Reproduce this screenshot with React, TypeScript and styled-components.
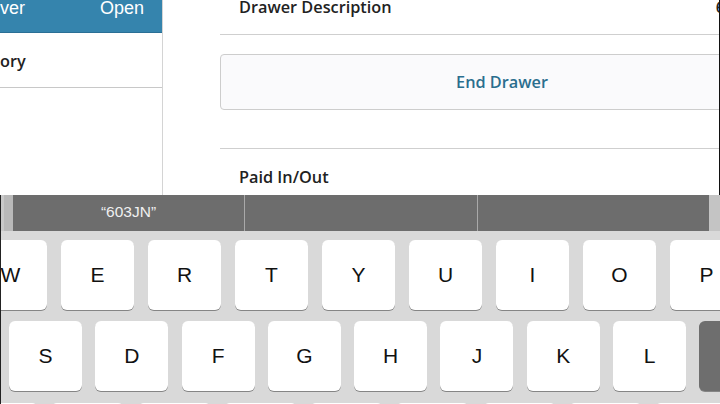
import styled, { createGlobalStyle } from 'styled-components';

const GlobalStyle = createGlobalStyle`
  html, body {
    margin: 0;
    padding: 0;
    background: #ffffff;
    font-family: 'Liberation Sans', Arial, sans-serif;
  }
`;

const labelFont = `'Open Sans', 'Liberation Sans', sans-serif`;

const Screen = styled.div`
  width: 720px;
  height: 404px;
  overflow: hidden;
  display: flex;
  flex-direction: column;
  background: #ffffff;
`;

const Top = styled.div`
  height: 195px;
  display: flex;
  overflow: hidden;
  border-right: 1px solid #111;
`;

const Sidebar = styled.div`
  width: 162px;
  flex-shrink: 0;
  border-right: 1px solid #d4d4d4;
  display: flex;
  flex-direction: column;
`;

const SideHeader = styled.div`
  height: 32px;
  background: #3584ad;
  border-bottom: 1px solid #2a6f95;
  display: flex;
  justify-content: space-between;
  padding-right: 18px;
  color: #ffffff;
  font-size: 18px;
  line-height: 16px;
`;

const SideRow = styled.div`
  height: 55px;
  border-bottom: 1px solid #c8c8c8;
  display: flex;
  align-items: center;
  padding-top: 2px;
  box-sizing: border-box;
  font-family: ${labelFont};
  font-size: 16.3px;
  font-weight: 600;
  color: #222;
`;

const Content = styled.div`
  flex: 1;
  padding-left: 57px;
  display: flex;
  flex-direction: column;
  min-width: 0;
`;

const DescRow = styled.div`
  height: 34px;
  border-bottom: 1px solid #cfcfcf;
  display: flex;
  justify-content: space-between;
  padding-left: 19px;
  font-family: ${labelFont};
  font-size: 16.3px;
  font-weight: 600;
  color: #222;
  line-height: 15px;
  margin-right: -6px;
`;

const ButtonArea = styled.div`
  height: 114px;
  border-bottom: 1px solid #cfcfcf;
  padding-top: 19px;
  box-sizing: border-box;
`;

const EndButton = styled.button`
  width: 564px;
  height: 56px;
  border: 1px solid #cdcdcd;
  border-radius: 4px;
  background: #fafafc;
  color: #2a6e8e;
  font-family: ${labelFont};
  font-size: 16.3px;
  font-weight: 600;
  padding: 0;
`;

const SectionTitle = styled.div`
  padding: 17px 0 0 19px;
  font-family: ${labelFont};
  font-size: 16.3px;
  font-weight: 600;
  color: #222;
`;

const Keyboard = styled.div`
  flex: 1;
  background: #d9d9d9;
  border-left: 1px solid #222;
  display: flex;
  flex-direction: column;
  overflow: hidden;
`;

const SuggestionBar = styled.div`
  height: 37px;
  display: flex;
  background: linear-gradient(90deg, #c9c9c9 0 3px, #b9b9b9 3px 12px, #6d6d6d 12px 708px, #c4c4c4 708px);
`;

const Suggestion = styled.div<{ $w: number; $first?: boolean }>`
  width: ${(p) => p.$w}px;
  height: 36px;
  margin-left: ${(p) => (p.$first ? 12 : 0)}px;
  border-right: 1px solid #a9a9a9;
  display: flex;
  align-items: center;
  justify-content: center;
  color: #f0f0f0;
  font-size: 15.5px;
  box-sizing: border-box;
  padding-bottom: 2px;
  &:last-child {
    border-right: none;
  }
`;

const KeyRow = styled.div<{ $offset: number; $gap: number; $top: number }>`
  display: flex;
  gap: ${(p) => p.$gap}px;
  margin-left: ${(p) => p.$offset}px;
  margin-top: ${(p) => p.$top}px;
  flex-shrink: 0;
`;

const Key = styled.div<{ $dark?: boolean }>`
  width: 73px;
  height: 70px;
  flex-shrink: 0;
  border-radius: 6px;
  background: ${(p) => (p.$dark ? '#6e6e6e' : '#ffffff')};
  box-shadow: 0 1px 0 #858585;
  display: flex;
  align-items: center;
  justify-content: center;
  font-size: 21px;
  color: #111;
`;

const topRow = ['W', 'E', 'R', 'T', 'Y', 'U', 'I', 'O', 'P'];
const midRow = ['S', 'D', 'F', 'G', 'H', 'J', 'K', 'L'];
const lowRow = ['X', 'C', 'V', 'B', 'N', 'M', ',', '.', '?'];

export default function App() {
  return (
    <>
      <GlobalStyle />
      <Screen>
        <Top>
          <Sidebar>
            <SideHeader>
              <span>ver</span>
              <span>Open</span>
            </SideHeader>
            <SideRow>ory</SideRow>
          </Sidebar>
          <Content>
            <DescRow>
              <span>Drawer Description</span>
              <span>6</span>
            </DescRow>
            <ButtonArea>
              <EndButton>End Drawer</EndButton>
            </ButtonArea>
            <SectionTitle>Paid In/Out</SectionTitle>
          </Content>
        </Top>
        <Keyboard>
          <SuggestionBar>
            <Suggestion $first $w={232}>“603JN”</Suggestion>
            <Suggestion $w={233} />
            <Suggestion $w={232} />
          </SuggestionBar>
          <KeyRow $offset={-27} $gap={14} $top={9}>
            {topRow.map((k) => (
              <Key key={k}>{k}</Key>
            ))}
          </KeyRow>
          <KeyRow $offset={8} $gap={13.3} $top={11}>
            {midRow.map((k) => (
              <Key key={k}>{k}</Key>
            ))}
            <Key $dark />
          </KeyRow>
          <KeyRow $offset={-36} $gap={13.3} $top={12}>
            {lowRow.map((k) => (
              <Key key={k}>{k}</Key>
            ))}
          </KeyRow>
        </Keyboard>
      </Screen>
    </>
  );
}
